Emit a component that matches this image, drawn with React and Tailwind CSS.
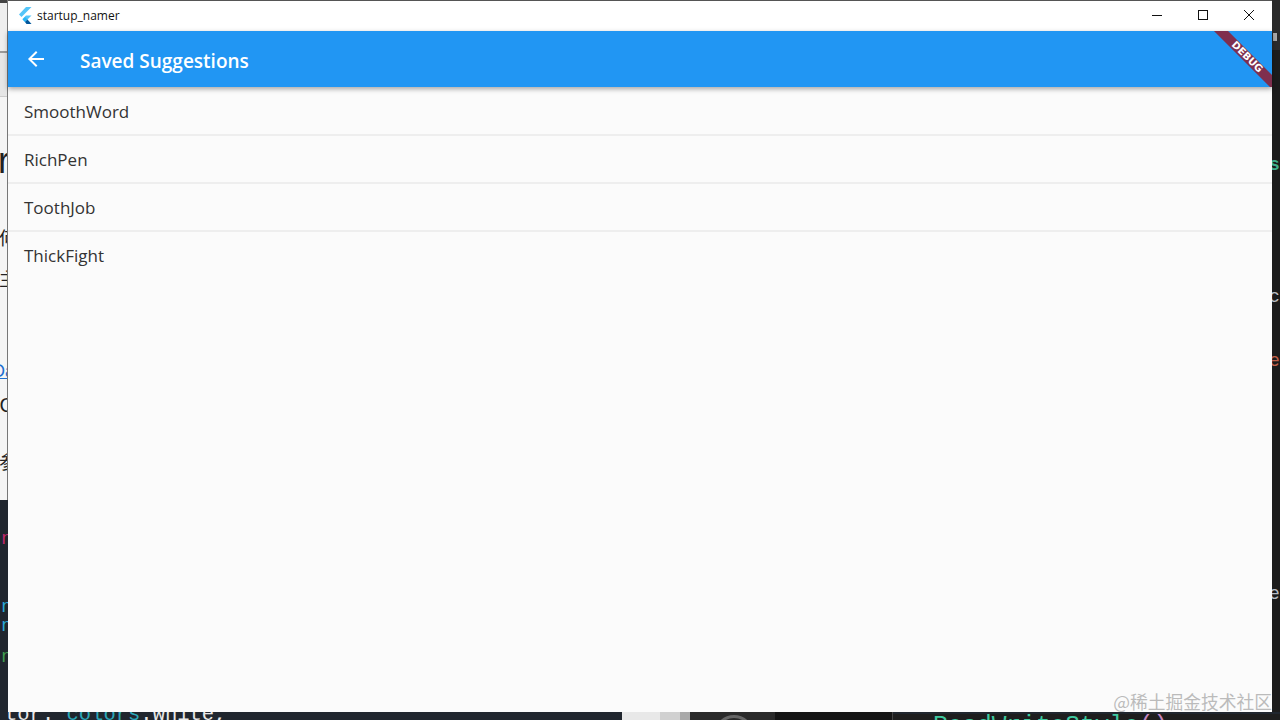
const names = ["SmoothWord", "RichPen", "ToothJob", "ThickFight"]

const FlutterLogo = () => (
  <svg width="16" height="18" viewBox="0 0 16 18">
    <path d="M9 0h5.5L4.5 10 2 7.5z" fill="#54c5f8" />
    <path d="M14.5 8.5H9L5.5 12l2.5 3z" fill="#54c5f8" />
    <path d="M5.5 12.5L8 10l2.5 2.5L8 15z" fill="#29b6f6" />
    <path d="M8 15l2.5-2.5 4 4.5H9.5z" fill="#01579b" />
  </svg>
)

const WindowControls = () => (
  <div className="flex items-center h-full">
    <svg width="46" height="30" viewBox="0 0 46 30" className="block">
      <path d="M18 14.5h10" stroke="#111" strokeWidth="1" />
    </svg>
    <svg width="46" height="30" viewBox="0 0 46 30" className="block">
      <rect x="18.5" y="9.5" width="9" height="9" fill="none" stroke="#111" strokeWidth="1" />
    </svg>
    <svg width="46" height="30" viewBox="0 0 46 30" className="block">
      <path d="M18 9l10 10M28 9L18 19" stroke="#111" strokeWidth="1" />
    </svg>
  </div>
)

// slices of the desktop behind the window
const LeftEdge = () => (
  <div className="w-2 shrink-0 flex flex-col overflow-hidden">
    <div className="h-[500px] bg-[#f5f5f5] border-r border-[#777] relative overflow-hidden font-['Liberation_Sans',sans-serif] text-[#222]">
      <div className="h-[3px] bg-[#444]" />
      <div className="h-[48px] bg-[#eeeeee]" />
      <div className="h-[2px] bg-[#999]" />
      <div className="h-[44px] bg-[#e6e6e6] border-b border-[#ccc]" />
      <span className="absolute top-[143px] right-[-3px] text-[36px] leading-none">r</span>
      <span className="absolute top-[228px] right-[-10px] text-[18px] leading-none font-['Noto_Sans_CJK_SC',sans-serif]">何</span>
      <span className="absolute top-[269px] right-[-10px] text-[18px] leading-none font-['Noto_Sans_CJK_SC',sans-serif]">主</span>
      <span className="absolute top-[362px] right-[-8px] text-[18px] leading-none text-[#1e6fd0] underline">Da</span>
      <span className="absolute top-[395px] right-[-7px] text-[20px] leading-none">C</span>
      <span className="absolute top-[452px] right-[-10px] text-[18px] leading-none font-['Noto_Sans_CJK_SC',sans-serif]">参</span>
    </div>
    <div className="flex-1 bg-[#20262e] relative overflow-hidden font-['Liberation_Mono',monospace] text-[18px] leading-none">
      <span className="absolute top-[30px] right-[-4px] text-[#c2286a]">n</span>
      <span className="absolute top-[98px] right-[-4px] text-[#29a9d6]">n</span>
      <span className="absolute top-[117px] right-[-4px] text-[#29a9d6]">n</span>
      <span className="absolute top-[148px] right-[-4px] text-[#3f9f4f]">n</span>
    </div>
  </div>
)

const RightEdge = () => (
  <div className="w-2 shrink-0 bg-[#1c1c1c] relative overflow-hidden font-['Liberation_Mono',monospace] text-[18px] leading-none">
    <div className="h-[50px] bg-[#2b2b2b] pt-[33px] pl-px">
      <div className="w-1 h-2 bg-[#aaaaaa]" />
    </div>
    <span className="absolute top-[156px] left-[-3px] font-bold text-[#3fae8c]">s</span>
    <span className="absolute top-[288px] left-[-3px] text-[#b9bcc4]">c</span>
    <span className="absolute top-[352px] left-[-3px] text-[#c0604a]">e</span>
    <span className="absolute top-[585px] left-[-3px] text-[#b9bcc4]">e</span>
  </div>
)

const BottomEdge = () => (
  <div className="h-2 shrink-0 bg-[#20262e] flex overflow-hidden font-['Liberation_Mono',monospace] leading-none">
    <div className="w-[622px] shrink-0 whitespace-nowrap pl-[5px] text-[20.5px] text-[#e8e8e8] -translate-y-[7px]">
      tor: <span className="text-[#2aa7b8]">colors</span>.white,
    </div>
    <div className="w-[38px] shrink-0 bg-[#e8e8e8]" />
    <div className="w-[20px] shrink-0 bg-[#d0d0d0]" />
    <div className="w-[10px] shrink-0 bg-[#a8a8a8]" />
    <div className="w-[85px] shrink-0 bg-[#2a2a2a] pl-[24px]">
      <div className="w-10 h-10 rounded-full border-[3px] border-[#666] mt-[3px]" />
    </div>
    <div className="w-[118px] shrink-0 bg-[#141414] border-r border-[#444]" />
    <div className="flex-1 bg-[#1e1e1e] pl-[40px] whitespace-nowrap text-[24.5px] text-[#3fc9a0] translate-y-[2px]">
      ReadWriteStyle<span className="text-[#c586c0]">()</span>
    </div>
  </div>
)

export default function App() {
  return (
    <div className="w-[1280px] h-[720px] relative overflow-hidden flex flex-col font-['Open_Sans',sans-serif]">
      <div className="flex flex-1 min-h-0">
        <LeftEdge />
        <div className="flex-1 flex flex-col min-w-0 border-t border-[#555] bg-[#fbfbfb]">
          <div className="h-[30px] shrink-0 bg-white flex items-center justify-between">
            <div className="flex items-center pl-[9px] gap-[4px]">
              <FlutterLogo />
              <span className="text-[12px] text-[#111]">startup_namer</span>
            </div>
            <WindowControls />
          </div>
          <div className="h-[56px] shrink-0 bg-[#2196f3] relative z-10 flex items-center shadow-[0_2px_5px_rgba(0,0,0,0.35)]">
            <svg width="24" height="24" viewBox="0 0 24 24" className="ml-4 -mt-[1px] shrink-0" fill="#fff">
              <path d="M20 11H7.83l5.59-5.59L12 4l-8 8 8 8 1.41-1.41L7.83 13H20v-2z" />
            </svg>
            <span className="ml-8 text-[19px] font-semibold text-white leading-none mt-[5px]">Saved Suggestions</span>
            <div className="absolute inset-0 overflow-hidden">
              <div className="absolute top-[21px] right-[-30px] w-[110px] h-[10px] rotate-45 bg-[#7f2f4e] flex items-center justify-center text-[10px] font-bold leading-none text-white font-['DejaVu_Sans',sans-serif]">
                DEBUG
              </div>
            </div>
          </div>
          <div className="flex-1 pt-px">
            {names.map((name, i) => (
              <div
                key={name}
                className={`h-[48px] flex items-center pl-4 pt-[2px] text-[17px] text-[#333333] border-b-2 ${i < names.length - 1 ? "border-[#eeeeee]" : "border-transparent"}`}
              >
                {name}
              </div>
            ))}
          </div>
        </div>
        <RightEdge />
      </div>
      <BottomEdge />
      <div className="absolute right-[8px] bottom-[9px] text-[17.75px] leading-none text-[#bbbbbb] whitespace-nowrap font-['Noto_Sans_CJK_SC',sans-serif]">
        @稀土掘金技术社区
      </div>
    </div>
  )
}
